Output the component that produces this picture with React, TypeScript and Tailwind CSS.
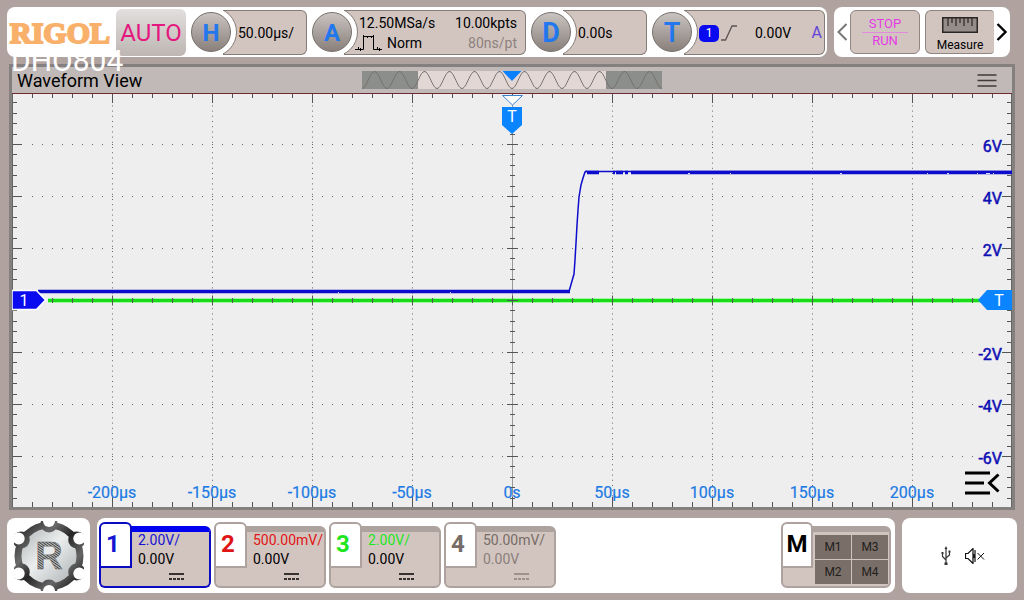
import clsx from 'clsx';
import { type PropsWithChildren, type ReactNode } from 'react';

interface DialProps {
    label: string;
    knob?: string;
    className?: string;
}

interface Channel {
    id: string;
    scale: string;
    offset: string;
    color: string;
    active?: boolean;
    off?: boolean;
}

const CHANNELS: Channel[] = [
    { id: '1', scale: '2.00V/', offset: '0.00V', color: 'text-[#1414d2]', active: true },
    { id: '2', scale: '500.00mV/', offset: '0.00V', color: 'text-[#e01414]' },
    { id: '3', scale: '2.00V/', offset: '0.00V', color: 'text-[#1ee61e]' },
    { id: '4', scale: '50.00mV/', offset: '0.00V', color: 'text-[#776c67]', off: true },
];

const TIMES = ['-200µs', '-150µs', '-100µs', '-50µs', '0s', '50µs', '100µs', '150µs', '200µs'];
const VOLTS = ['6V', '4V', '2V', '', '-2V', '-4V', '-6V'];

// Plot geometry
const W = 1000;
const H = 414;
const CX = 500;
const CY = 207;
const DIV = 52;

function range(count: number) {
    return Array.from({ length: count }, (_, i) => i);
}

function Dial({ label, knob = 'text-2xl font-bold', className, children }: PropsWithChildren<DialProps>) {
    return (
        <button type="button" className="flex min-w-0 items-center text-left">
            <span
                className={clsx(
                    'z-10 flex size-10 shrink-0 items-center justify-center rounded-full border border-[#77706d] bg-gradient-to-b from-[#c9c4c1] to-[#8a807b] pt-0.5 leading-none text-[#2277ee]',
                    knob,
                )}
            >
                {label}
            </span>
            <span className="relative -ml-2 flex h-[45px] min-w-0 grow items-center overflow-hidden rounded-r-md border border-l-0 border-[#857b77] bg-[#d2c5c0] pl-[15px]">
                {/* white collar around the knob */}
                <span className="absolute top-1/2 -left-9 size-[50px] -translate-y-1/2 rounded-full border border-[#857b77] bg-white" />
                <span className={clsx('relative flex min-w-0 grow items-center pt-0.5 text-sm leading-5', className)}>
                    {children}
                </span>
            </span>
        </button>
    );
}

function ToolButton({ children, className }: { children: ReactNode; className?: string }) {
    return (
        <button
            type="button"
            className={clsx(
                'flex h-11 min-w-0 flex-1 flex-col items-center justify-center border border-[#8f8581] bg-[#d2c5c0]',
                className,
            )}
        >
            {children}
        </button>
    );
}

function Header() {
    return (
        <header className="flex gap-[7px] pr-[7px]">
            <div className="relative flex h-[50px] min-w-0 grow items-center rounded-lg bg-white pr-0.5 pl-[3px]">
                <div className="w-[106px] shrink-0 pt-0.5 font-['Liberation_Serif',serif] text-[30px] leading-none font-bold text-[#f9b06a] [-webkit-text-stroke:2px_#f9b06a]">
                    RIGOL
                </div>
                <span className="absolute top-9 left-1 z-10 text-[30px] leading-9 text-white">DHO804</span>
                <button
                    type="button"
                    className="mr-[5px] h-[47px] w-[70px] shrink-0 rounded-md bg-gradient-to-b from-[#e2dfde] to-[#bdb6b3] pt-0.5 text-2xl text-[#e5177f]"
                >
                    AUTO
                </button>
                <div className="grid min-w-0 grow grid-cols-[116fr_214fr_116fr_173fr] gap-[5px]">
                    <Dial label="H">50.00µs/</Dial>
                    <Dial label="A" className="justify-between pr-2">
                        <span>
                            <span className="block">12.50MSa/s</span>
                            <span className="-ml-1 flex items-center gap-1">
                                <svg className="h-4 w-7" viewBox="0 0 28 16" fill="none" stroke="#000" strokeWidth="1">
                                    <path d="M0 14.500h8.500V1.500h10v13H27" />
                                    <path d="M3.500 12v2M5.500 13v3M12.500 1v2M16.500 1v2M22.500 12v2M24.500 13v3M8.500 0v2M18.500 0v2" />
                                </svg>
                                Norm
                            </span>
                        </span>
                        <span className="text-right">
                            <span className="block">10.00kpts</span>
                            <span className="block text-[#8d827d]">80ns/pt</span>
                        </span>
                    </Dial>
                    <Dial label="D" knob="text-[27px] font-bold">
                        0.00s
                    </Dial>
                    <Dial label="T" knob="text-[27px] font-semibold">
                        <span className="w-5 rounded-[5px] bg-[#0a0af0] text-center text-xs leading-[17px] text-white">1</span>
                        <svg className="ml-0.5 h-4 w-4" viewBox="0 0 16 16" fill="none" stroke="#5c5350" strokeWidth="1.3">
                            <path d="M0 15h4.500L11 1h5" />
                        </svg>
                        <span className="ml-[18px] grow">0.00V</span>
                        <span className="pr-0.5 text-base text-[#6645d6]">A</span>
                    </Dial>
                </div>
            </div>

            <div className="flex h-[50px] w-[176px] shrink-0 items-center rounded-lg bg-white px-0.5">
                <button type="button" aria-label="Previous" className="w-3.5">
                    <svg className="h-[18px] w-3" viewBox="0 0 12 18" fill="none" stroke="#777" strokeWidth="2">
                        <path d="M10.500 1 2.500 9l8 8" />
                    </svg>
                </button>
                <ToolButton className="rounded-md text-[13px] leading-4 text-[#e43ae4]">
                    <span className="border-b border-[#e08be0] px-[7px]">STOP</span>
                    <span>RUN</span>
                </ToolButton>
                <ToolButton className="ml-[5px] rounded-l-md rounded-r-sm border-r-0 pt-0.5 text-xs leading-4">
                    <svg className="mt-1 mb-1 h-4 w-9" viewBox="0 0 36 16" fill="none">
                        <rect x="0.750" y="0.750" width="34.500" height="14.500" fill="#968c88" stroke="#2a2626" strokeWidth="1.500" />
                        <path d="M6 1v8M10 1v5M14 1v8M18 1v5M22 1v8M26 1v5M30 1v8" stroke="#2a2626" strokeWidth="1.200" />
                    </svg>
                    Measure
                </ToolButton>
                <button type="button" aria-label="Next" className="flex w-3.5 justify-end">
                    <svg className="h-[18px] w-3" viewBox="0 0 12 18" fill="none" stroke="#000" strokeWidth="2.400">
                        <path d="M1.500 1l8 8-8 8" />
                    </svg>
                </button>
            </div>
        </header>
    );
}

function Navigator() {
    // one period every 25 units, troughs on the multiples of 25
    const points = range(301)
        .map((x) => `${x},${(9 + 8.5 * Math.cos((x / 25) * 2 * Math.PI)).toFixed(2)}`)
        .join(' ');

    return (
        <svg className="h-[18px] w-[300px]" viewBox="0 0 300 18">
            <rect width="300" height="18" fill="#8c8e8c" />
            <rect x="56" width="188" height="18" fill="#e2d7d5" />
            <polyline points={points} fill="none" stroke="#77716f" strokeWidth="1" />
            <path d="M140.500 0h19L150 10z" fill="#0a80ff" />
        </svg>
    );
}

function Plot() {
    const minorX = range(49).map((i) => (i + 1) * 20);
    const minorY = range(39).map((i) => Math.round(CY + (i - 19) * 10.4) + 0.5);
    const majorY = range(7).map((i) => CY + (i - 3) * DIV + 0.5);

    return (
        <svg className="block w-full" viewBox={`0 0 ${W} ${H}`} role="img" aria-label="Waveform plot">
            <rect width={W} height={H} fill="#eeeeee" />

            {/* dotted graticule */}
            <g stroke="#666" strokeWidth="1">
                {range(9)
                    .filter((i) => i !== 4)
                    .map((i) => (
                        <path key={i} d={`M${(i + 1) * 100 + 0.5} 2V${H}`} strokeDasharray="1 4.2" />
                    ))}
                {majorY
                    .filter((y) => y !== CY + 0.5)
                    .map((y) => (
                        <path key={y} d={`M20 ${y}H968`} strokeDasharray="1 9" />
                    ))}
            </g>
            <path d={`M${CX + 0.5} 0V${H}`} stroke="#999" />

            {/* green channel */}
            <path d={`M36 ${CY + 0.5}H970`} stroke="#a4f8a4" strokeWidth="5" />
            <path d={`M36 ${CY + 0.5}H970`} stroke="#18dc18" strokeWidth="3" />

            {/* ticks */}
            <g stroke="#555" strokeWidth="1">
                {minorX.map((x) => {
                    const len = x % 100 === 0 ? 10 : 5;
                    return (
                        <path
                            key={x}
                            d={`M${x + 0.5} 0v${len}M${x + 0.5} ${H}v${-len}M${x + 0.5} ${CY - len / 2 + 0.5}v${len}`}
                        />
                    );
                })}
                {minorY.map((y) => (
                    <path key={y} d={`M0 ${y}h5M${W} ${y}h-5M${CX - 2} ${y}h5`} />
                ))}
                {majorY.map((y) => (
                    <path key={y} d={`M0 ${y}h10M${W} ${y}h-10M${CX - 5} ${y}h11`} />
                ))}
            </g>
            <path d={`M0.500 0V${H}M${W - 0.5} 0V${H}`} stroke="#666" />
            <path d={`M0 0.500H${W}`} stroke="#6e2a30" />

            {/* blue channel */}
            <g fill="none" stroke="#0c0ccc">
                <path d="M26 198.500H558" strokeWidth="3.500" />
                <path d="M557 198.500 560 188l2-7 1-14 1-17 1-18 1-15 1-13 2-12 2-7 2-6 2-1" strokeWidth="1.500" />
                <path d="M573 78.500H1000" strokeWidth="1.500" />
                <path d="M575 79.500h12M601 79.500h2M604 79.500h7M613 79.500h3M619 79.500H1000" strokeWidth="3.500" />
            </g>
            <path d="M676 80.500h2M718 80.500h1M828 80.500h2M915 80.500h1M935 80.500h2M965 80.500h1M974 80.500h4M981 80.500h1M326 199.500h1M438 199.500h1" stroke="#d6d6f5" />

            <g fill="#1c7ae4" stroke="#1c7ae4" strokeWidth="0.200" fontSize="16" textAnchor="middle">
                {TIMES.map((t, i) => (
                    <text key={t} x={(i + 1) * 100} y="405">
                        {t}
                    </text>
                ))}
            </g>
            <g fill="#0e0eb4" stroke="#0e0eb4" strokeWidth="0.500" fontSize="16" textAnchor="end">
                {VOLTS.map((v, i) => (
                    <text key={i} x="990" y={CY + (i - 3) * DIV + 8}>
                        {v}
                    </text>
                ))}
            </g>

            {/* markers */}
            <path d="M0 197.500h24.500L33.500 207l-9 9.500H0z" fill="#0a0af0" stroke="#fff" strokeWidth="1.500" />
            <path d="M1000 197h-25l-9 10 9 10h25z" fill="#0a84ff" />
            <path d="M490.500 2.500h20L500.500 12z" fill="#fff" stroke="#3d84d0" />
            <path d="M490 14h20v18l-10 9-10-9z" fill="#0a84ff" />
            <g fill="#fff" fontSize="16" textAnchor="middle">
                <text x="12" y="213">1</text>
                <text x="987" y="213">T</text>
                <text x="500" y="29">T</text>
            </g>
        </svg>
    );
}

function WaveformView() {
    return (
        <main className="mx-0.5 border-[3px] border-[#858080]">
            <div className="grid h-[26px] grid-cols-[1fr_auto_1fr] items-center bg-[#c0b9b7]">
                <h1 className="pt-0.5 pl-[5px] text-lg leading-6">Waveform View</h1>
                <Navigator />
                <button type="button" aria-label="Menu" className="mr-[15px] justify-self-end">
                    <svg className="h-4 w-5" viewBox="0 0 20 16" stroke="#3f3b3a" strokeWidth="1.500">
                        <path d="M0.500 3h19M0.500 8.500h19M0.500 14h19" />
                    </svg>
                </button>
            </div>
            <div className="relative">
                <Plot />
                <button type="button" aria-label="Open side panel" className="absolute right-3 bottom-3">
                    <svg className="h-6 w-9" viewBox="0 0 36 24" fill="none" stroke="#000" strokeWidth="3">
                        <path d="M1 2h25M1 12h19M1 22h25M34.500 3.500 25.500 12l9 8.500" />
                    </svg>
                </button>
            </div>
        </main>
    );
}

function GearLogo() {
    const notches = range(6).map((i) => {
        const a = ((30 + i * 60) * Math.PI) / 180;
        return { cos: Math.cos(a), sin: Math.sin(a) };
    });

    return (
        <svg className="size-[70px]" viewBox="-35 -35 70 70">
            <defs>
                <linearGradient id="rim" gradientUnits="userSpaceOnUse" x1="-25" y1="-25" x2="25" y2="25">
                    <stop offset="0" stopColor="#3a3a3a" />
                    <stop offset="0.250" stopColor="#6a6a6a" />
                    <stop offset="0.500" stopColor="#262626" />
                    <stop offset="0.800" stopColor="#666" />
                    <stop offset="1" stopColor="#303030" />
                </linearGradient>
                <linearGradient id="face" x1="0" y1="0" x2="1" y2="1">
                    <stop offset="0" stopColor="#b0b4b6" />
                    <stop offset="0.450" stopColor="#eceeee" />
                    <stop offset="1" stopColor="#acb0b2" />
                </linearGradient>
                <pattern id="hatch" width="2" height="2" patternUnits="userSpaceOnUse" patternTransform="rotate(35)">
                    <rect width="2" height="2" fill="#c0c3c3" />
                    <rect width="2" height="1" fill="#444" />
                </pattern>
            </defs>
            <circle r="34.500" fill="url(#rim)" />
            <circle r="27.500" fill="url(#face)" />
            {notches.map((n, i) => (
                <g key={i}>
                    <circle cx={n.cos * 32} cy={n.sin * 32} r="8.500" fill="url(#rim)" />
                    <circle cx={n.cos * 35} cy={n.sin * 35} r="6" fill="#fff" />
                </g>
            ))}
            <text
                y="13"
                textAnchor="middle"
                fontSize="38"
                fontWeight="bold"
                fill="url(#hatch)"
                stroke="#555"
                strokeWidth="0.400"
                className="font-['Liberation_Sans',sans-serif]"
            >
                R
            </text>
        </svg>
    );
}

function ChannelCard({ channel }: { channel: Channel }) {
    const { id, scale, offset, color, active, off } = channel;
    const border = active ? 'border-[#0a0ac0]' : 'border-[#aea29e]';

    return (
        <button
            type="button"
            className={clsx(
                'relative mt-[3px] flex h-[62px] w-28 flex-col rounded-md border-2 border-t-[6px] bg-[#d2c5c0] pl-[37px] text-left text-sm leading-[19px] whitespace-nowrap',
                border,
                active && 'border-t-[#0000f0]',
            )}
        >
            <span
                className={clsx(
                    'absolute -top-2.5 -left-0.5 flex h-[46px] w-[33px] items-center rounded-t-md border-2 bg-white pb-0.5 pl-[5px] text-2xl leading-none font-bold',
                    border,
                    color,
                )}
            >
                {id}
            </span>
            <span className={clsx('-mt-px', color)}>{scale}</span>
            <span className={clsx(off && 'text-[#8a7f7a]')}>{offset}</span>
            {/* DC coupling */}
            <svg
                className={clsx('mt-1 ml-[31px] h-2 w-[15px]', off ? 'text-[#8a7f7a]' : 'text-black')}
                viewBox="0 0 15 8"
                stroke="currentColor"
                strokeWidth="1.500"
            >
                <path d="M0 1h15" />
                <path d="M0 6h15" strokeDasharray="3 1" />
            </svg>
        </button>
    );
}

function Footer() {
    return (
        <footer className="mt-px flex gap-[7px]">
            <button
                type="button"
                aria-label="Function navigation"
                className="flex h-[75px] w-[83px] shrink-0 items-center justify-center rounded-lg bg-white"
            >
                <GearLogo />
            </button>

            <div className="flex h-[75px] min-w-0 grow items-center gap-[3px] rounded-lg bg-white pr-1 pl-0.5">
                {CHANNELS.map((channel) => (
                    <ChannelCard key={channel.id} channel={channel} />
                ))}
                <button
                    type="button"
                    className="relative mt-[3px] ml-auto h-[62px] w-[110px] rounded-md border-2 border-t-[6px] border-[#aea29e] bg-[#d2c5c0] pl-8"
                >
                    <span className="absolute -top-2.5 -left-0.5 flex h-[46px] w-8 items-center justify-center rounded-t-md border-2 border-[#aea29e] bg-white pb-0.5 text-2xl leading-none font-bold">
                        M
                    </span>
                    <span className="mr-px grid grid-cols-2 gap-px text-xs leading-6 text-[#221e1c]">
                        <span className="bg-[#7a6e68]">M1</span>
                        <span className="bg-[#7a6e68]">M3</span>
                        <span className="bg-[#7a6e68]">M2</span>
                        <span className="bg-[#7a6e68]">M4</span>
                    </span>
                </button>
            </div>

            <div className="flex h-[75px] w-[115px] shrink-0 items-center justify-center gap-3.5 rounded-lg bg-white pl-1.5">
                <svg className="h-5 w-2.5" viewBox="0 0 10 20" fill="none" stroke="#333" strokeWidth="1.200">
                    <path d="M5 2v15M5 14 1.500 10.500V8M5 12l3.500-3V6" />
                    <path d="M5 0 3.500 3h3zM3.500 16.500h3v2.500h-3zM0.500 6h2v2h-2zM7.500 4.500h2v2h-2z" fill="#333" stroke="none" />
                </svg>
                <svg className="h-4 w-5" viewBox="0 0 20 16" fill="none" stroke="#111" strokeWidth="1.200">
                    <path d="M0.500 5.500h2.500L8 0.500v15L3 10.500H0.500zM7.500 5l2 3-2 3M10 2v12" />
                    <path d="M12.500 5l6.500 6.500M19 5l-6.500 6.500" strokeWidth="1" />
                </svg>
            </div>
        </footer>
    );
}

export default function App() {
    return (
        <div className="flex min-h-screen flex-col gap-[7px] bg-[#afa29f] p-[7px] font-[Roboto,sans-serif] text-black">
            <Header />
            <WaveformView />
            <Footer />
        </div>
    );
}
